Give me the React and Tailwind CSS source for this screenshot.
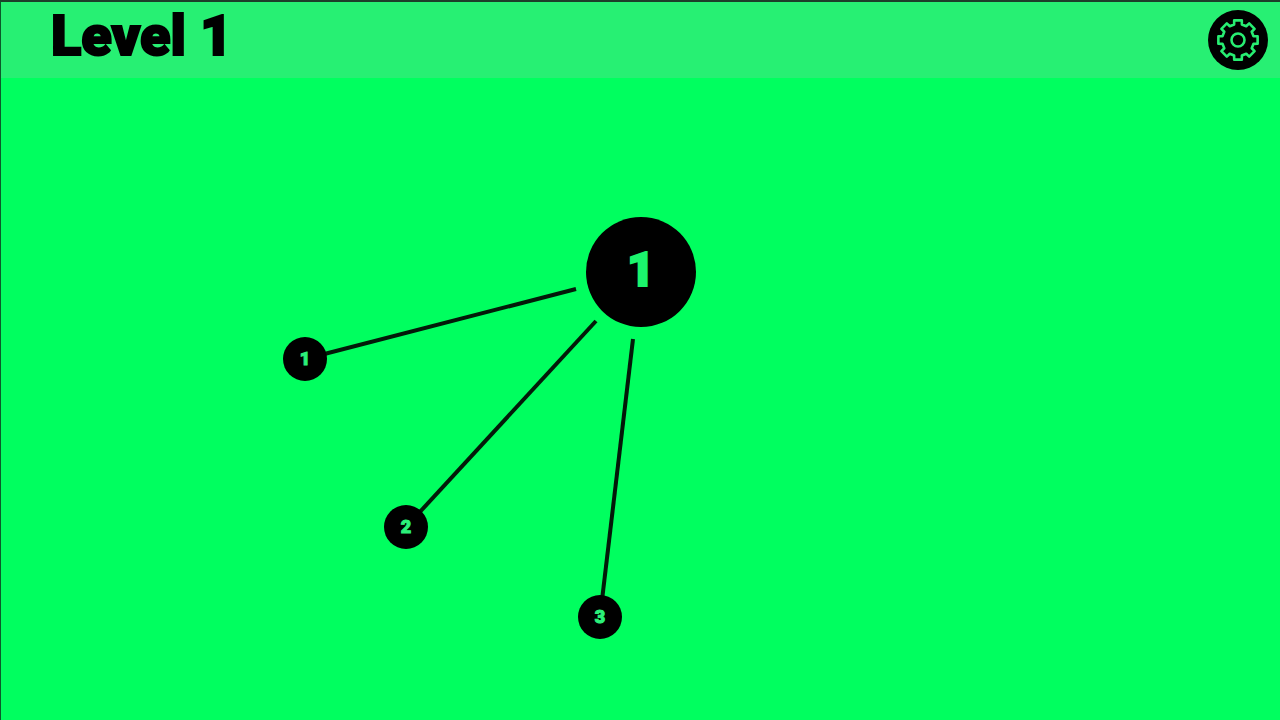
import React, { useState } from "react";

const pins = [
    { label: "1", place: "left-[3px] top-[259px]", line: { x1: 296, y1: 211, x2: 25, y2: 281 } },
    { label: "2", place: "left-[104px] top-[427px]", line: { x1: 316, y1: 243, x2: 126, y2: 449 } },
    { label: "3", place: "left-[298px] top-[517px]", line: { x1: 353, y1: 261, x2: 320, y2: 539 } },
];

// outline of the cog, eight teeth around the centre of a 60x60 box
function gearPath() {
    const points = [];
    for (let i = 0; i < 8; i++) {
        [[-14, 16], [-11, 20], [11, 20], [14, 16]].forEach(([offset, radius]) => {
            const angle = ((i * 45 + offset) * Math.PI) / 180;
            const x = 30 + radius * Math.cos(angle);
            const y = 30 + radius * Math.sin(angle);
            points.push(x.toFixed(2) + " " + y.toFixed(2));
        });
    }
    return "M" + points.join("L") + "Z";
}

function SettingsButton() {
    return (
        <button type="button" aria-label="Settings" className="h-[60px] w-[60px] rounded-full bg-black">
            <svg viewBox="0 0 60 60" className="h-full w-full" fill="none" stroke="#27ee72" strokeWidth="2.6">
                <path d={gearPath()} strokeLinejoin="round" />
                <circle cx="30" cy="30" r="6.5" />
            </svg>
        </button>
    );
}

function Board({ remaining }) {
    return (
        <div className="relative mx-auto h-[600px] w-[721px]">
            <svg className="absolute inset-0 h-full w-full" viewBox="0 0 721 600" stroke="#031a09" strokeWidth="4">
                {pins.map((pin) => (
                    <line key={pin.label} {...pin.line} />
                ))}
            </svg>
            <div className="absolute left-[306px] top-[139px] flex h-[110px] w-[110px] items-center justify-center rounded-full bg-black pb-1 text-5xl text-[#1bf56c] [-webkit-text-stroke:2px_#1bf56c]">
                {remaining}
            </div>
            {pins.map((pin) => (
                <div
                    key={pin.label}
                    className={`absolute flex h-11 w-11 items-center justify-center rounded-full bg-black text-lg text-[#2bf07a] [-webkit-text-stroke:1px_#2bf07a] ${pin.place}`}
                >
                    {pin.label}
                </div>
            ))}
        </div>
    );
}

export default function App() {
    const [level] = useState(1);
    return (
        <div className="flex min-h-screen flex-col overflow-hidden border-l border-t-2 border-l-[#0b5a2a] border-t-[#1d3f2a] bg-[#00ff5f] font-['Roboto',sans-serif] font-black">
            <header className="flex h-[76px] items-center justify-between bg-[#27f073] pl-[50px] pr-3">
                <h1 className="pb-2 text-[56px] leading-none text-black [-webkit-text-stroke:2px_#000]">Level {level}</h1>
                <SettingsButton />
            </header>
            <main className="flex-1">
                <Board remaining={1} />
            </main>
        </div>
    );
}
